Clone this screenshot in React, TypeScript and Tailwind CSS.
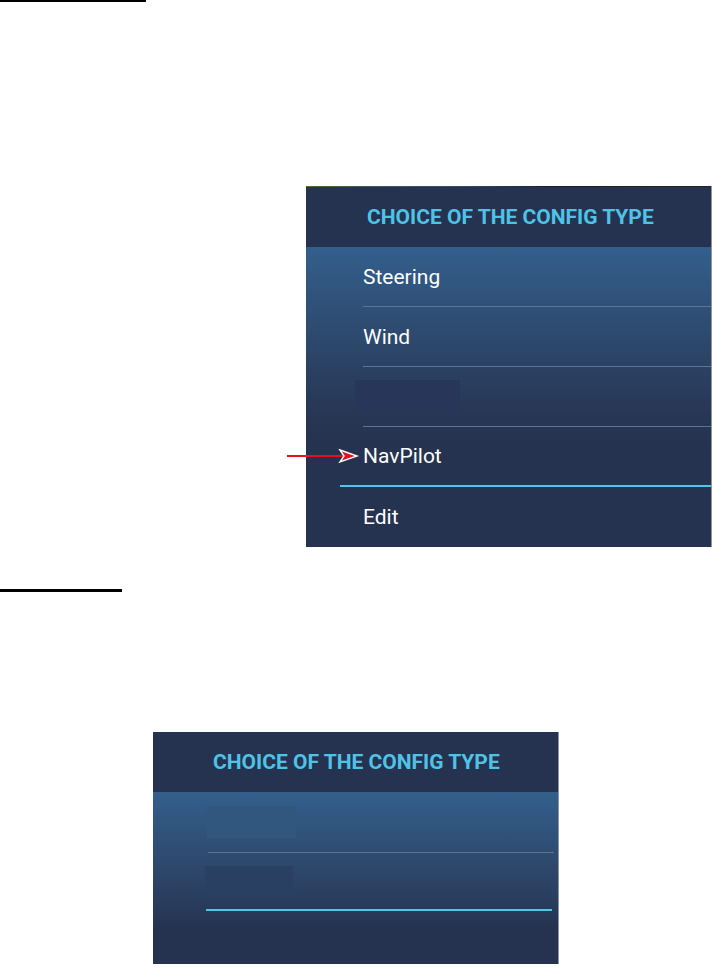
import React from 'react';

const font = { fontFamily: 'Roboto, "Liberation Sans", sans-serif' };

// red pointer that sits over the panel edge
const Arrow: React.FC = () => (
  <svg width="74" height="16" viewBox="0 0 74 16" className="absolute left-[-53px] top-[-8px]">
    <line x1="0" y1="8" x2="58" y2="8" stroke="#e8101e" strokeWidth="2" />
    <path d="M53 2 L70 8 L53 14 L57 8 Z" fill="#e8101e" stroke="#ffffff" strokeWidth="1.4" strokeLinejoin="miter" />
  </svg>
);

const Header: React.FC<{ pl: string }> = ({ pl }) => (
  <div className={`h-[60px] bg-[#253350] flex items-center ${pl}`}>
    <span className="text-[21px] font-bold text-[#4fc3e6] leading-none pt-[1px]">
      CHOICE OF THE CONFIG TYPE
    </span>
  </div>
);

type RowProps = { label?: string; cyan?: boolean; last?: boolean; children?: React.ReactNode };

const Row: React.FC<RowProps> = ({ label, cyan, last, children }) => (
  <div
    className={`h-[60px] flex ${cyan ? 'ml-[34px] border-b-2 border-[#52c6ea]' : 'ml-[57px]'} ${
      !cyan && !last ? 'border-b border-[#5a7597]' : ''
    }`}
  >
    <div className={`relative flex items-center ${cyan ? 'pl-[23px]' : ''}`}>
      {children}
      {label && <span className="text-[21px] text-white leading-none pt-[1px]">{label}</span>}
    </div>
  </div>
);

export default function App() {
  return (
    <div className="w-[712px] h-[973px] bg-white overflow-hidden" style={font}>
      <div className="h-[2px] w-[146px] bg-black" />

      {/* first screen */}
      <div className="mt-[184px] ml-[306px] w-[406px] flex">
        <div className="w-[405px]">
          <div className="h-px bg-[linear-gradient(to_right,#4a6b3a,#3b5b55,#2f4d66,#1a1f22,#1d2a1f,#2a2020)]" />
          <Header pl="pl-[61px]" />
          <div className="bg-[linear-gradient(to_bottom,#335f8c_0px,#2c4467_110px,#273653_170px,#253350_200px)]">
            <Row label="Steering" />
            <Row label="Wind" />
            <Row>
              <div className="-ml-[8px] w-[105px] h-[33px] bg-[#28365a]" />
            </Row>
            <Row label="NavPilot" cyan>
              <div className="absolute left-0 top-1/2">
                <Arrow />
              </div>
            </Row>
            <Row label="Edit" last />
          </div>
        </div>
        <div className="w-px bg-[#8d95a3]" />
      </div>

      <div className="mt-[42px] h-[3px] w-[122px] bg-black" />

      {/* second screen */}
      <div className="mt-[140px] ml-[153px] w-[406px] flex">
        <div className="w-[405px]">
          <Header pl="pl-[60px]" />
          <div className="bg-[linear-gradient(to_bottom,#335f8c_0px,#2d4669_80px,#283a5a_118px,#253350_135px)]">
            <div className="h-[61px] ml-[55px] mr-[4px] border-b border-[#5a7597] flex items-center">
              <div className="-ml-px w-[89px] h-[32px] bg-[#31577f]" />
            </div>
            <div className="h-[58px] ml-[53px] mr-[6px] border-b-2 border-[#52c6ea] flex items-center">
              <div className="-ml-px w-[88px] h-[31px] bg-[#2a4062]" />
            </div>
            <div className="h-[53px]" />
          </div>
        </div>
        <div className="w-px bg-[#8d95a3]" />
      </div>
    </div>
  );
}
